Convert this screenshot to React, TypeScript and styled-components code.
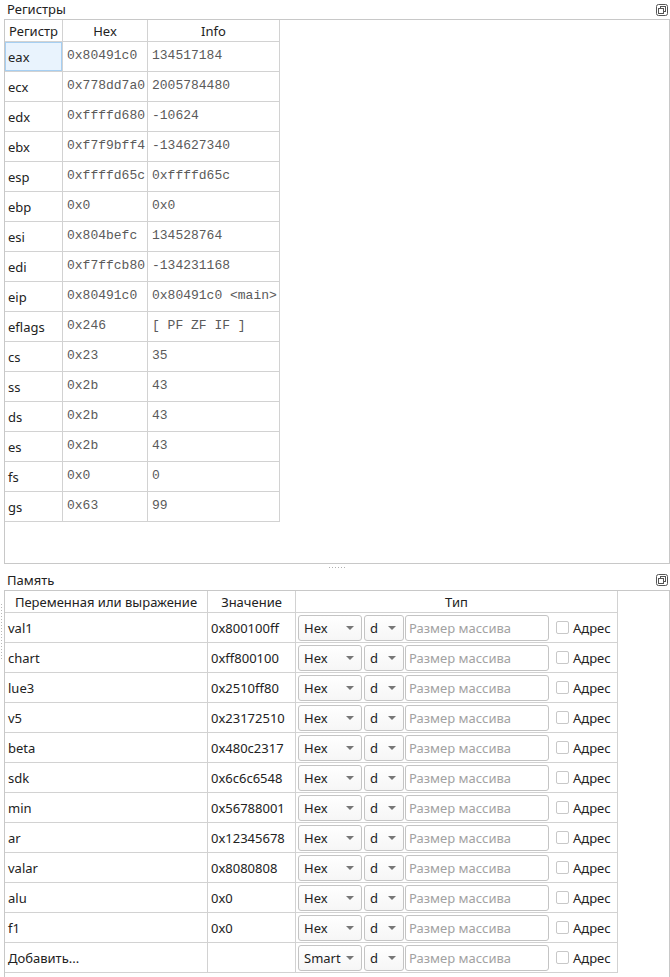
import React from 'react';
import styled, { createGlobalStyle } from 'styled-components';

const GlobalStyle = createGlobalStyle`
  html, body {
    margin: 0;
    padding: 0;
    background: #ffffff;
  }
  body {
    font-family: "Noto Sans", "DejaVu Sans", sans-serif;
    font-size: 13px;
    color: #222;
  }
`;

// --- layout ---

const Page = styled.div`
  width: 670px;
  height: 977px;
  display: flex;
  flex-direction: column;
  overflow: hidden;
  position: relative;
`;

const DockTitle = styled.div<{ $h: number }>`
  height: ${(p) => p.$h}px;
  display: flex;
  align-items: center;
  justify-content: space-between;
  padding: 0 2px 0 7px;
  color: #222;
  line-height: 1;
`;

const DetachIcon = () => (
  <svg width="12" height="12" viewBox="0 0 12 12">
    <rect x="0.5" y="0.5" width="11" height="11" rx="2" fill="none" stroke="#555" />
    <rect x="4.5" y="2.5" width="5" height="5" fill="none" stroke="#555" />
    <rect x="2.5" y="4.5" width="5" height="5" fill="#fff" stroke="#555" />
  </svg>
);

const Frame = styled.div<{ $h?: number }>`
  margin-left: 4px;
  width: 666px;
  box-sizing: border-box;
  border: 1px solid #c8c8c8;
  ${(p) => (p.$h ? `height: ${p.$h}px;` : 'flex: 1; border-bottom: none;')}
  background: #fff;
`;

const Splitter = styled.div`
  height: 6px;
  display: flex;
  justify-content: center;
  align-items: center;
`;

const Dots = styled.div`
  width: 18px;
  height: 1px;
  margin-left: 4px;
  background-image: radial-gradient(circle, #b0b0b0 0.6px, transparent 0.8px);
  background-size: 3px 1px;
`;

const SideHandle = styled.div`
  position: absolute;
  left: 1px;
  top: 604px;
  width: 1px;
  height: 56px;
  background-image: linear-gradient(#b8b8b8 50%, transparent 50%);
  background-size: 1px 3px;
`;

// --- register table ---

const RegGrid = styled.div`
  display: grid;
  grid-template-columns: 58px 85px 132px;
  width: 275px;
`;

const HeadCell = styled.div`
  height: 22px;
  box-sizing: border-box;
  border-bottom: 1px solid #d2d2d2;
  border-right: 1px solid #d2d2d2;
  display: flex;
  align-items: center;
  justify-content: center;
  color: #222;
`;

const Cell = styled.div<{ $mono?: boolean; $selected?: boolean; $pad?: number }>`
  height: 30px;
  box-sizing: border-box;
  border-bottom: 1px solid #d2d2d2;
  border-right: 1px solid #d2d2d2;
  display: flex;
  align-items: center;
  padding-left: ${(p) => p.$pad ?? 3}px;
  padding-bottom: ${(p) => (p.$mono ? 2 : 0)}px;
  white-space: pre;
  font-family: ${(p) => (p.$mono ? '"Liberation Mono", "Courier New", monospace' : 'inherit')};
  color: ${(p) => (p.$mono ? '#5a5a5a' : '#222')};
  background: ${(p) => (p.$selected ? '#e9f3fd' : 'transparent')};
  box-shadow: ${(p) => (p.$selected ? 'inset 0 0 0 1px #a6cff2' : 'none')};
`;

// --- memory table ---

const MemGrid = styled.div`
  display: grid;
  grid-template-columns: 203px 88px 322px;
  width: 613px;
`;

const TypeCell = styled.div`
  height: 30px;
  box-sizing: border-box;
  border-bottom: 1px solid #d2d2d2;
  border-right: 1px solid #d2d2d2;
  display: flex;
  align-items: center;
  padding-left: 2px;
`;

const Combo = styled.div<{ $w: number }>`
  width: ${(p) => p.$w}px;
  height: 26px;
  box-sizing: border-box;
  border: 1px solid #c4c4c4;
  border-radius: 3px;
  background: linear-gradient(#ffffff, #f6f6f6);
  display: flex;
  align-items: center;
  justify-content: space-between;
  padding: 0 7px 0 5px;
  margin-right: 2px;
  color: #222;
`;

const Arrow = styled.span`
  width: 0;
  height: 0;
  border-left: 4px solid transparent;
  border-right: 4px solid transparent;
  border-top: 4px solid #777;
`;

const SizeInput = styled.div`
  width: 144px;
  height: 26px;
  box-sizing: border-box;
  border: 1px solid #c4c4c4;
  border-radius: 3px;
  display: flex;
  align-items: center;
  padding-left: 3px;
  color: #a2a2a2;
  margin-left: -1px;
`;

const Check = styled.span`
  width: 13px;
  height: 13px;
  box-sizing: border-box;
  border: 1px solid #c8c8c8;
  border-radius: 2px;
  background: #fff;
  margin: 0 4px 0 7px;
`;

const CheckLabel = styled.span`
  color: #222;
`;

// --- data ---

const registers: [string, string, string][] = [
  ['eax', '0x80491c0', '134517184'],
  ['ecx', '0x778dd7a0', '2005784480'],
  ['edx', '0xffffd680', '-10624'],
  ['ebx', '0xf7f9bff4', '-134627340'],
  ['esp', '0xffffd65c', '0xffffd65c'],
  ['ebp', '0x0', '0x0'],
  ['esi', '0x804befc', '134528764'],
  ['edi', '0xf7ffcb80', '-134231168'],
  ['eip', '0x80491c0', '0x80491c0 <main>'],
  ['eflags', '0x246', '[ PF ZF IF ]'],
  ['cs', '0x23', '35'],
  ['ss', '0x2b', '43'],
  ['ds', '0x2b', '43'],
  ['es', '0x2b', '43'],
  ['fs', '0x0', '0'],
  ['gs', '0x63', '99'],
];

const memory: [string, string, string][] = [
  ['val1', '0x800100ff', 'Hex'],
  ['chart', '0xff800100', 'Hex'],
  ['lue3', '0x2510ff80', 'Hex'],
  ['v5', '0x23172510', 'Hex'],
  ['beta', '0x480c2317', 'Hex'],
  ['sdk', '0x6c6c6548', 'Hex'],
  ['min', '0x56788001', 'Hex'],
  ['ar', '0x12345678', 'Hex'],
  ['valar', '0x8080808', 'Hex'],
  ['alu', '0x0', 'Hex'],
  ['f1', '0x0', 'Hex'],
  ['Добавить...', '', 'Smart'],
];

export default function App() {
  return (
    <Page>
      <GlobalStyle />
      <DockTitle $h={19}>
        <span>Регистры</span>
        <DetachIcon />
      </DockTitle>
      <Frame $h={545}>
        <RegGrid>
          <HeadCell>Регистр</HeadCell>
          <HeadCell>Hex</HeadCell>
          <HeadCell>Info</HeadCell>
          {registers.map(([name, hex, info], i) => (
            <React.Fragment key={name}>
              <Cell $selected={i === 0}>{name}</Cell>
              <Cell $mono $pad={4}>{hex}</Cell>
              <Cell $mono $pad={4}>{info}</Cell>
            </React.Fragment>
          ))}
        </RegGrid>
      </Frame>
      <Splitter>
        <Dots />
      </Splitter>
      <DockTitle $h={20}>
        <span>Память</span>
        <DetachIcon />
      </DockTitle>
      <Frame>
        <MemGrid>
          <HeadCell>Переменная или выражение</HeadCell>
          <HeadCell>Значение</HeadCell>
          <HeadCell>Тип</HeadCell>
          {memory.map(([name, value, fmt]) => (
            <React.Fragment key={name}>
              <Cell>{name}</Cell>
              <Cell $pad={3}>{value}</Cell>
              <TypeCell>
                <Combo $w={64}>
                  {fmt}
                  <Arrow />
                </Combo>
                <Combo $w={40}>
                  d
                  <Arrow />
                </Combo>
                <SizeInput>Размер массива</SizeInput>
                <Check />
                <CheckLabel>Адрес</CheckLabel>
              </TypeCell>
            </React.Fragment>
          ))}
        </MemGrid>
      </Frame>
      <SideHandle />
    </Page>
  );
}
